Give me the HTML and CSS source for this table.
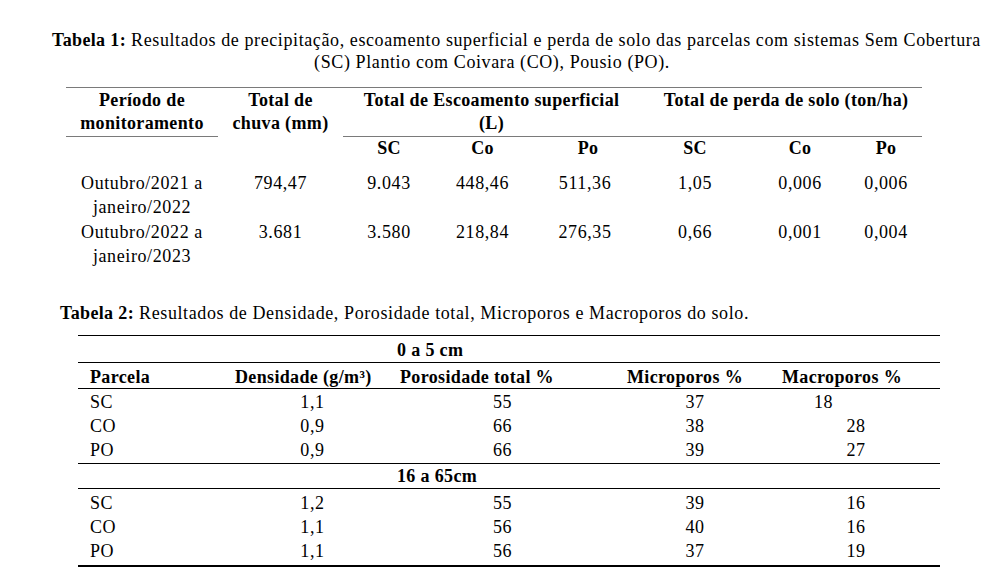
FILE: index.html
```html
<!DOCTYPE html>
<html lang="pt">
<head>
<meta charset="utf-8">
<title>Tabelas</title>
<link rel="stylesheet" href="styles.css">
</head>
<body>
<div class="page">
  <p class="cap1">
    <span class="l1"><b>Tabela 1:</b> Resultados de precipitação, escoamento superficial e perda de solo das parcelas com sistemas Sem Cobertura</span>
    <span class="l2">(SC) Plantio com Coivara (CO), Pousio (PO).</span>
  </p>
  <table class="t1">
    <colgroup>
      <col class="w152"><col class="w125"><col class="w92"><col class="w95"><col class="w110"><col class="w110"><col class="w100"><col class="w72">
    </colgroup>
    <thead>
      <tr class="h1">
        <th class="ul">Período de<br>monitoramento</th>
        <th>Total de<br>chuva (mm)</th>
        <th colspan="3" class="ul">Total de Escoamento superficial<br>(L)</th>
        <th colspan="3" class="ul perda">Total de perda de solo (ton/ha)</th>
      </tr>
      <tr class="h2">
        <th></th><th></th>
        <th>SC</th><th>Co</th><th class="po">Po</th>
        <th>SC</th><th>Co</th><th>Po</th>
      </tr>
    </thead>
    <tbody>
      <tr class="r1">
        <td>Outubro/2021 a<br>janeiro/2022</td>
        <td>794,47</td><td>9.043</td><td>448,46</td><td>511,36</td><td>1,05</td><td>0,006</td><td>0,006</td>
      </tr>
      <tr>
        <td>Outubro/2022 a<br>janeiro/2023</td>
        <td>3.681</td><td>3.580</td><td>218,84</td><td>276,35</td><td>0,66</td><td>0,001</td><td>0,004</td>
      </tr>
    </tbody>
  </table>

  <p class="cap2"><b>Tabela 2:</b> Resultados de Densidade, Porosidade total, Microporos e Macroporos do solo.</p>
  <table class="t2">
    <colgroup>
      <col class="c1"><col class="c2"><col class="c3"><col class="c4"><col class="c5">
    </colgroup>
    <tbody>
      <tr class="sec first">
        <th colspan="5">0 a 5 cm</th>
      </tr>
      <tr class="hdr">
        <th class="p">Parcela</th>
        <th class="d">Densidade (g/m³)</th>
        <th class="por">Porosidade total %</th>
        <th class="mi">Microporos %</th>
        <th class="ma">Macroporos %</th>
      </tr>
      <tr class="top">
        <td class="p">SC</td><td>1,1</td><td>55</td><td>37</td><td class="ma odd">18</td>
      </tr>
      <tr>
        <td class="p">CO</td><td>0,9</td><td>66</td><td>38</td><td class="ma">28</td>
      </tr>
      <tr class="bot">
        <td class="p">PO</td><td>0,9</td><td>66</td><td>39</td><td class="ma">27</td>
      </tr>
      <tr class="sec second">
        <th colspan="5">16 a 65cm</th>
      </tr>
      <tr class="top top2">
        <td class="p">SC</td><td>1,2</td><td>55</td><td>39</td><td class="ma">16</td>
      </tr>
      <tr>
        <td class="p">CO</td><td>1,1</td><td>56</td><td>40</td><td class="ma">16</td>
      </tr>
      <tr class="bot last">
        <td class="p">PO</td><td>1,1</td><td>56</td><td>37</td><td class="ma">19</td>
      </tr>
    </tbody>
  </table>
</div>
</body>
</html>
```

FILE: styles.css
```css
html, body {
  margin: 0;
  padding: 0;
  background: #ffffff;
}

body {
  color: #000000;
  font-family: "Liberation Serif", "Times New Roman", serif;
  font-size: 18px;
  letter-spacing: 0.6px;
}

b, th {
  letter-spacing: 0.35px;
}

.page {
  width: 1006px;
}

/* ---------- Table 1 caption ---------- */
.cap1 {
  margin: 0;
  padding-top: 29px;
  margin-left: 52px;
  width: 926px;
  text-align: center;
  line-height: 22px;
}

.cap1 .l1 {
  display: block;
  white-space: nowrap;
}

.cap1 .l2 {
  display: block;
  padding-right: 46px;
}

/* ---------- Table 1 ---------- */
.t1 {
  margin-top: 14px;
  margin-left: 66px;
  width: 856px;
  border-collapse: collapse;
  table-layout: fixed;
  border-top: 1.5px solid #7a7a7a;
}

.w152 { width: 152px; }
.w125 { width: 125px; }
.w92 { width: 92px; }
.w95 { width: 95px; }
.w110 { width: 110px; }
.w100 { width: 100px; }
.w72 { width: 72px; }

.t1 th,
.t1 td {
  padding: 0;
  text-align: center;
  vertical-align: top;
  font-weight: normal;
}

.t1 th {
  font-weight: bold;
  line-height: 23px;
}

.t1 .h1 th {
  padding-top: 1px;
  padding-bottom: 1px;
}

.t1 .h1 th.ul {
  border-bottom: 1.5px solid #7a7a7a;
}

.t1 .h1 th.perda {
  padding-left: 10px;
}

.t1 .h2 th {
  padding-top: 0;
}

.t1 .h2 th.po {
  padding-left: 6px;
}

.t1 td {
  line-height: 24px;
}

.t1 .r1 td {
  padding-top: 11px;
  padding-bottom: 1px;
}

/* ---------- Table 2 caption ---------- */
.cap2 {
  margin: 34px 0 0 60px;
  line-height: 22px;
}

/* ---------- Table 2 ---------- */
.t2 {
  margin-top: 11px;
  margin-left: 78px;
  width: 862px;
  border-collapse: collapse;
  table-layout: fixed;
  border-top: 1px solid #000;
  border-bottom: 2px solid #000;
}

.c1 { width: 152px; }
.c2 { width: 165px; }
.c3 { width: 215px; }
.c4 { width: 170px; }
.c5 { width: 160px; }

.t2 th,
.t2 td {
  padding: 0;
  text-align: center;
  font-weight: normal;
  white-space: nowrap;
}

.t2 th {
  font-weight: bold;
}

.t2 .sec th {
  text-align: left;
  padding-left: 319px;
  padding-top: 3px;
  padding-bottom: 1px;
  line-height: 22px;
  border-bottom: 1px solid #000;
}

.t2 .sec.second th {
  padding-top: 1px;
}

.t2 .hdr th {
  text-align: left;
  padding-top: 3px;
  padding-bottom: 0;
  line-height: 22px;
  border-bottom: 1px solid #000;
}

.t2 .hdr th.p { padding-left: 12px; }
.t2 .hdr th.d { padding-left: 5px; }
.t2 .hdr th.por { padding-left: 5px; }
.t2 .hdr th.mi { padding-left: 17px; }
.t2 .hdr th.ma { padding-left: 2px; }

.t2 td {
  line-height: 24px;
}

.t2 td.p {
  text-align: left;
  padding-left: 12px;
}

.t2 td.ma {
  padding-right: 8px;
}

.t2 td.odd {
  text-align: left;
  padding-left: 34px;
  padding-right: 0;
}

.t2 .top td {
  padding-top: 1px;
}

.t2 .top2 td {
  padding-top: 2px;
}

.t2 .bot td {
  padding-bottom: 1px;
  border-bottom: 1px solid #000;
}

.t2 .bot.last td {
  padding-bottom: 2px;
  border-bottom: 2px solid #000;
}
```
